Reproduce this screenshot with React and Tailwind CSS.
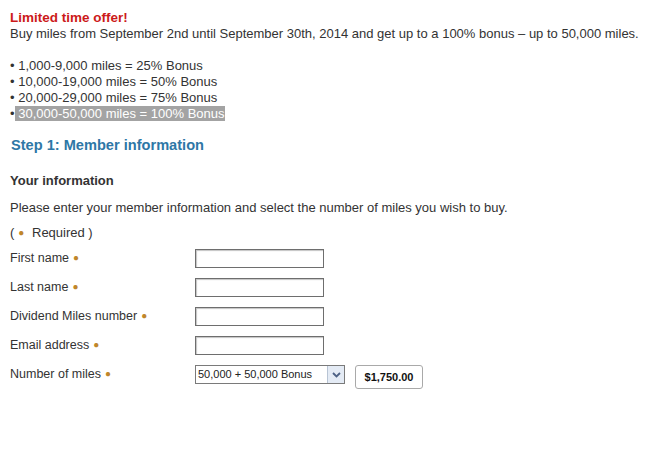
import React from "react";

const bonuses = [
  "1,000-9,000 miles = 25% Bonus",
  "10,000-19,000 miles = 50% Bonus",
  "20,000-29,000 miles = 75% Bonus",
];

const fields = ["First name", "Last name", "Dividend Miles number", "Email address"];

const Dot = () => <span className="text-[#c0862a] ml-1 text-[10px] align-[1px]">●</span>;

const App = () => {
  return (
    <div className="w-[660px] h-[452px] bg-white text-[#333] font-['Liberation_Sans',Arial,sans-serif] px-[10px] pt-[10px]">
      {/* Offer block */}
      <div className="text-[13px] leading-[16px]">
        <p className="font-bold text-[13.5px] text-[#cc1a1a]">Limited time offer!</p>
        <p>Buy miles from September 2nd until September 30th, 2014 and get up to a 100% bonus – up to 50,000 miles.</p>
        <div className="mt-[16px]">
          {bonuses.map((b) => (
            <p key={b}>• {b}</p>
          ))}
          <p>
            •<span className="bg-[#a3a3a3] text-white"> 30,000-50,000 miles = 100% Bonus</span>
          </p>
        </div>
      </div>

      <h2 className="mt-[15px] ml-px text-[14.6px] leading-[16px] font-bold text-[#2e77a6]">Step 1: Member information</h2>

      <h3 className="mt-[20px] text-[13px] leading-[16px] font-bold">Your information</h3>
      <p className="mt-[11px] text-[13px] leading-[16px]">
        Please enter your member information and select the number of miles you wish to buy.
      </p>
      <p className="mt-[9px] text-[13px] leading-[16px]">
        (<span className="text-[#c0862a] mx-1 text-[10px] align-[1px]">●</span> Required )
      </p>

      {/* Form */}
      <div className="mt-[3px] text-[12.5px]">
        {fields.map((f) => (
          <div key={f} className="flex items-center h-[29px]">
            <label className="w-[185px]">
              {f}
              <Dot />
            </label>
            <input
              type="text"
              className="w-[129px] h-[19px] border border-[#6e6e6e] shadow-[inset_1px_1px_1px_#c4c4c4] bg-white outline-none"
            />
          </div>
        ))}
        <div className="flex items-center h-[29px]">
          <label className="w-[185px]">
            Number of miles
            <Dot />
          </label>
          <div className="flex items-start h-[19px]">
            <div className="flex w-[150px] h-[19px] border border-[#7a7a7a] bg-white">
              <span className="flex-1 text-[11px] leading-[17px] pl-[2px] text-[#222]">50,000 + 50,000 Bonus</span>
              <span className="w-[17px] h-full border-l border-[#b8c4d4] bg-[#e4ebf5] flex items-center justify-center">
                <svg width="9" height="6" viewBox="0 0 9 6">
                  <path d="M1 1 L4.5 4.5 L8 1" fill="none" stroke="#4d6185" strokeWidth="1.8" />
                </svg>
              </span>
            </div>
            <button className="ml-[10px] h-[24px] w-[68px] border border-[#a9a9a9] rounded-[3px] bg-white text-[11px] font-bold text-[#111]">
              $1,750.00
            </button>
          </div>
        </div>
      </div>
    </div>
  );
};

export default App;
